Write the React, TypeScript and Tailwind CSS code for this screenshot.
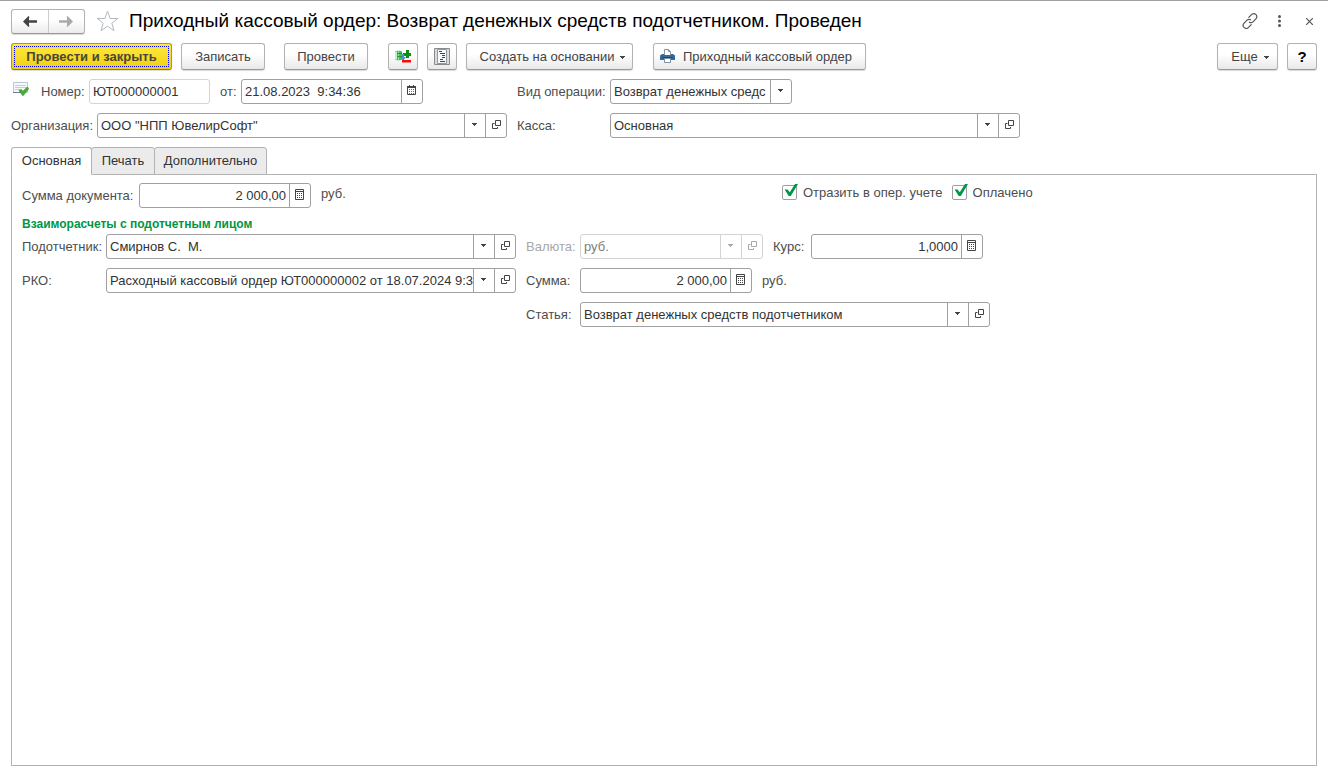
import { useState } from "react";
import type { ReactNode } from "react";

const commandClass =
  "flex h-[27px] shrink-0 items-center justify-center rounded-[3px] border border-[#b3b3b3] border-b-[#999] bg-linear-to-b from-white from-40% to-[#e9e9e9] text-[#444] shadow-[0_1px_1px_rgba(0,0,0,0.15)]";

function Caret({ className = "" }: { className?: string }) {
  return (
    <svg className={className} width="6" height="3" viewBox="0 0 6 3" fill="currentColor" aria-hidden="true">
      <path d="M0 0h5v1H4v1H3v1H2V2H1V1H0z" />
    </svg>
  );
}

function OpenIcon() {
  return (
    <svg width="10" height="9" viewBox="0 0 10 9" fill="none" stroke="currentColor" aria-hidden="true">
      <path d="M4.500 .5h5v5h-5zM3.500 3.500H1.500v5h5V7" />
    </svg>
  );
}

function CalculatorIcon() {
  return (
    <svg width="10" height="11" viewBox="0 0 10 11" fill="none" stroke="currentColor" aria-hidden="true">
      <path d="M.5 .5h8v10h-8zM1 2.500h7" />
      <path d="M2 4.500h5M2 6.500h5M2 8.500h5" strokeDasharray="1 1" />
    </svg>
  );
}

function CalendarIcon() {
  return (
    <svg width="10" height="11" viewBox="0 0 10 11" fill="none" stroke="currentColor" aria-hidden="true">
      <path d="M.5 1.500h8v8h-8z" />
      <path d="M0 2.500h9M0 1.500h9M2.500 0v2M6.500 0v2" />
      <path d="M2 4.500h5M2 6.500h5M2 8.500h5" strokeDasharray="1 1" opacity=".8" />
    </svg>
  );
}

type Tool = "list" | "open" | "calculator" | "calendar";

const toolIcons: Record<Tool, { label: string; icon: ReactNode }> = {
  list: { label: "Выбрать из списка", icon: <Caret /> },
  open: { label: "Открыть", icon: <OpenIcon /> },
  calculator: { label: "Калькулятор", icon: <CalculatorIcon /> },
  calendar: { label: "Календарь", icon: <CalendarIcon /> },
};

interface FieldProps {
  id: string;
  value: string;
  width: string;
  tools?: Tool[];
  numeric?: boolean;
  readOnly?: boolean;
  disabled?: boolean;
}

function Field({ id, value, width, tools = [], numeric, readOnly, disabled }: FieldProps) {
  const pale = readOnly || disabled;
  return (
    <div
      className={`flex h-[25px] shrink-0 overflow-hidden rounded-[3px] border bg-white ${width} ${
        pale ? "border-[#d4d4d4]" : "border-[#a0a0a0]"
      }`}
    >
      <input
        id={id}
        type="text"
        defaultValue={value}
        readOnly={readOnly}
        disabled={disabled}
        className={`min-w-0 flex-1 bg-transparent pl-[3px] outline-none ${numeric ? "pr-[3px] text-right" : ""} ${
          disabled ? "text-[#808080]" : "text-[#333]"
        }`}
      />
      {tools.map((tool) => (
        <button
          key={tool}
          type="button"
          disabled={disabled}
          aria-label={toolIcons[tool].label}
          className={`flex w-[21px] shrink-0 items-center justify-center border-l pb-[2px] ${
            disabled ? "border-[#d4d4d4] text-[#a8a8a8]" : "border-[#a0a0a0] text-[#444]"
          }`}
        >
          {toolIcons[tool].icon}
        </button>
      ))}
    </div>
  );
}

function Label({ htmlFor, className = "", children }: { htmlFor: string; className?: string; children: ReactNode }) {
  return (
    <label htmlFor={htmlFor} className={`shrink-0 whitespace-nowrap ${className || "text-[#4d4d4d]"}`}>
      {children}
    </label>
  );
}

function CheckField({ id, label }: { id: string; label: string }) {
  return (
    <div className="flex items-center gap-[6px] text-[#4d4d4d]">
      <span className="relative flex">
        <input
          id={id}
          type="checkbox"
          defaultChecked
          className="peer size-[15px] appearance-none rounded-[2px] border border-[#a0a0a0] bg-white"
        />
        <svg
          className="pointer-events-none absolute -top-[1px] left-[2px] hidden peer-checked:block"
          width="15"
          height="14"
          viewBox="0 0 15 14"
          fill="#009646"
          aria-hidden="true"
        >
          <path d="M.6 5.600h3l2.200 2.600L11 0h3L6.800 12H4.700z" />
        </svg>
      </span>
      <label htmlFor={id}>{label}</label>
    </div>
  );
}

function TitleBar() {
  return (
    <header className="flex h-[24px] items-center">
      <div className="flex h-[25px] w-[74px] shrink-0 overflow-hidden rounded-[3px] border border-[#b3b3b3] border-b-[#999] bg-linear-to-b from-white from-40% to-[#ececec] shadow-[0_1px_1px_rgba(0,0,0,0.15)]">
        <button type="button" aria-label="Назад" className="flex flex-1 items-center justify-center text-[#444]">
          <svg width="14" height="11" viewBox="0 0 14 11" fill="currentColor" aria-hidden="true">
            <path d="M0 5.500 5.500 0l1 1-2.600 3.300H14v2.400H3.900L6.500 10l-1 1z" />
            <path d="M1 5.500 6 1v9z" />
          </svg>
        </button>
        <button
          type="button"
          aria-label="Вперед"
          className="flex flex-1 items-center justify-center border-l border-[#ccc] text-[#aaa]"
        >
          <svg width="14" height="11" viewBox="0 0 14 11" fill="currentColor" aria-hidden="true">
            <path d="M14 5.500 8.500 0l-1 1 2.600 3.300H0v2.400h10.100L7.500 10l1 1z" />
            <path d="M13 5.500 8 1v9z" />
          </svg>
        </button>
      </div>
      <button type="button" aria-label="Добавить в избранное" className="ml-[11px] shrink-0">
        <svg width="23" height="22" viewBox="0 0 23 22" fill="none" stroke="#b4bac0" aria-hidden="true">
          <path d="m11.500 1.200 2.700 7.300h7.600l-6 4.700 2.200 7.500-6.500-4.500L5 20.700l2.200-7.500-6-4.700h7.600z" />
        </svg>
      </button>
      <h1 className="ml-[10px] min-w-0 flex-1 truncate text-[19px] leading-[24px] text-black">
        Приходный кассовый ордер: Возврат денежных средств подотчетником. Проведен
      </h1>
      <div className="flex shrink-0 items-center text-[#555]">
        <button type="button" aria-label="Получить ссылку" className="mr-[20px]">
          <svg width="16" height="16" viewBox="0 0 16 16" fill="none" stroke="currentColor" strokeWidth="1.200" strokeLinecap="round" aria-hidden="true">
            <path d="M6.800 4.400 9.500 1.700a2.900 2.900 0 0 1 4.600 3.900L11 8.800a2.900 2.900 0 0 1-3.600.4" />
            <path d="m9.200 11.600-2.700 2.700a2.900 2.900 0 0 1-4.600-3.900L5 7.200a2.900 2.900 0 0 1 3.600-.4" />
          </svg>
        </button>
        <button type="button" aria-label="Дополнительные действия" className="mr-[25px]">
          <svg width="3" height="12" viewBox="0 0 3 12" fill="currentColor" aria-hidden="true">
            <circle cx="1.500" cy="1.500" r="1.500" />
            <circle cx="1.500" cy="6" r="1.500" />
            <circle cx="1.500" cy="10.500" r="1.500" />
          </svg>
        </button>
        <button type="button" aria-label="Закрыть" className="mr-[4px]">
          <svg width="7" height="7" viewBox="0 0 7 7" fill="none" stroke="currentColor" strokeWidth="1.200" aria-hidden="true">
            <path d="m0 0 7 7M7 0 0 7" />
          </svg>
        </button>
      </div>
    </header>
  );
}

function CommandBar() {
  return (
    <div className="mt-[10px] flex items-center">
      <button
        type="button"
        className="h-[27px] w-[161px] shrink-0 rounded-[3px] border border-[#b59c00] border-b-[#8f7b00] bg-linear-to-b from-[#ffea3d] to-[#f2cf00] p-[2px] font-bold text-[#4a4636] shadow-[0_1px_1px_rgba(0,0,0,0.15)]"
      >
        <span className="flex h-full items-center justify-center border border-dotted border-[#0000ff]">
          Провести и закрыть
        </span>
      </button>
      <button type="button" className={`${commandClass} ml-[9px] w-[84px]`}>
        Записать
      </button>
      <button type="button" className={`${commandClass} ml-[19px] w-[84px]`}>
        Провести
      </button>
      <button type="button" aria-label="Движения документа" className={`${commandClass} ml-[20px] w-[30px]`}>
        <svg width="16" height="17" viewBox="0 0 16 17" aria-hidden="true">
          <path d="M0 3.500C0 2.500 7 2.500 7 3.500v8c0 1-7 1-7 0z" fill="#3fbf55" />
          <path d="M0 3.500h2v8H0z" fill="#c3efc9" />
          <path d="M3 3h1v9H3z" fill="#8fe09b" />
          <path d="M2 5.500h5M2 8.500h5" stroke="#1f9a35" />
          <path d="M11 2h3v3h2v3h-2v2h-3V8H8V5h3z" fill="#0c8f14" />
          <path d="M7 6h2v3h2l-3 4-3-4h2z" fill="#4795cf" />
          <path d="M7 12h9v2.500H7z" fill="#f50d0d" />
        </svg>
      </button>
      <button type="button" aria-label="Журнал" className={`${commandClass} ml-[9px] w-[30px]`}>
        <svg width="16" height="17" viewBox="0 0 16 17" fill="none" aria-hidden="true">
          <path d="M.5.5h15v16H.5z" fill="#d9dcdf" stroke="#8a8a8a" />
          <path d="M3.500 1.500h9v14h-9z" fill="#f5fbff" stroke="#8f979d" />
          <path d="M5 3.500h3M6 5.500h5M8 7.500h3M8 9.500h3M6 11.500h3M6 13.500h5" stroke="#0f527f" />
        </svg>
      </button>
      <button type="button" className={`${commandClass} ml-[9px] w-[167px] gap-[6px] pl-[7px]`}>
        Создать на основании
        <Caret className="mt-[2px]" />
      </button>
      <button type="button" className={`${commandClass} ml-[20px] w-[213px] gap-[8px] pr-[7px]`}>
        <svg className="mb-[2px]" width="15" height="14" viewBox="0 0 15 14" aria-hidden="true">
          <path d="M4.500 6V.5h4L10.500 2.500V6" fill="#fff" stroke="#8496a8" />
          <path d="M8.500.5v2h2" fill="none" stroke="#8496a8" />
          <path d="M2 5h2v1h7V5h2l2 1.500V11H0V6.500z" fill="#386a97" />
          <path d="M2 8.500h11" stroke="#1f4668" />
          <path d="M4.500 9.500h6v4h-6z" fill="#fff" stroke="#7b8fa3" />
        </svg>
        Приходный кассовый ордер
      </button>
      <button type="button" className={`${commandClass} ml-auto w-[61px] gap-[6px] pl-[6px]`}>
        Еще
        <Caret className="mt-[2px]" />
      </button>
      <button type="button" aria-label="Справка" className={`${commandClass} ml-[9px] w-[30px] text-[15px] font-bold text-black`}>
        ?
      </button>
    </div>
  );
}

function DocumentHeader() {
  return (
    <div className="mt-[9px] flex flex-col gap-[9px]">
      <div className="flex items-center gap-[10px]">
        <div className="flex w-[496px] shrink-0 items-center">
          <svg className="ml-[2px] mb-[5px] shrink-0" width="16" height="14" viewBox="0 0 16 14" aria-hidden="true">
            <path d="M.5.5h14v10H.5z" fill="#f7fafc" stroke="#b9c6d1" />
            <path d="M0 10.500h8" stroke="#6f8193" />
            <path d="M2 3.500h11M2 5.500h11M2 7.500h5" stroke="#c3ced8" />
            <path d="m6 8.600 2.200-1.200L10 9.300 14.200 5l1.500 1.600-5.400 6.800H9.600z" fill="#45b32f" stroke="#2a8020" strokeWidth=".6" />
          </svg>
          <div className="ml-[12px] w-[48px] shrink-0">
            <Label htmlFor="number">Номер:</Label>
          </div>
          <Field id="number" value="ЮТ000000001" width="w-[121px]" readOnly />
          <div className="ml-[10px] w-[21px] shrink-0">
            <Label htmlFor="date">от:</Label>
          </div>
          <Field id="date" value="21.08.2023  9:34:36" width="w-[182px]" tools={["calendar"]} />
        </div>
        <div className="flex items-center">
          <div className="w-[93px] shrink-0">
            <Label htmlFor="operation">Вид операции:</Label>
          </div>
          <div className="relative flex h-[25px] w-[182px] shrink-0 rounded-[3px] border border-[#a0a0a0]">
            <select
              id="operation"
              className="min-w-0 flex-1 appearance-none bg-transparent pr-[21px] pl-[3px] text-[#333] outline-none"
            >
              <option>Возврат денежных средс</option>
            </select>
            <span className="pointer-events-none absolute inset-y-0 right-0 flex w-[21px] items-center justify-center border-l border-[#a0a0a0] pb-[2px] text-[#444]">
              <Caret />
            </span>
          </div>
        </div>
      </div>
      <div className="flex items-center gap-[10px]">
        <div className="flex w-[496px] shrink-0 items-center">
          <div className="w-[86px] shrink-0">
            <Label htmlFor="organization">Организация:</Label>
          </div>
          <Field id="organization" value={'ООО "НПП ЮвелирСофт"'} width="w-[410px]" tools={["list", "open"]} />
        </div>
        <div className="flex items-center">
          <div className="w-[93px] shrink-0">
            <Label htmlFor="cashbox">Касса:</Label>
          </div>
          <Field id="cashbox" value="Основная" width="w-[410px]" tools={["list", "open"]} />
        </div>
      </div>
    </div>
  );
}

function MainTab() {
  return (
    <div className="flex flex-col px-[10px] pt-[8px]">
      <div className="flex">
        <div className="flex w-[760px] shrink-0 items-center">
          <div className="w-[117px] shrink-0">
            <Label htmlFor="total">Сумма документа:</Label>
          </div>
          <Field id="total" value="2 000,00" width="w-[172px]" tools={["calculator"]} numeric />
          <span className="ml-[10px] pb-[4px] text-[#4d4d4d]">руб.</span>
        </div>
        <div className="flex h-[19px] shrink-0 items-center gap-[9px] whitespace-nowrap">
          <CheckField id="reflect" label="Отразить в опер. учете" />
          <CheckField id="paid" label="Оплачено" />
        </div>
      </div>
      <h2 className="mt-[8px] text-[12px] leading-[16px] font-bold text-[#009646]">
        Взаиморасчеты с подотчетным лицом
      </h2>
      <div className="mt-[2px] flex items-start gap-[10px]">
        <div className="flex shrink-0 flex-col gap-[9px]">
          <div className="flex items-center">
            <div className="w-[84px] shrink-0">
              <Label htmlFor="person">Подотчетник:</Label>
            </div>
            <Field id="person" value="Смирнов С.  М." width="w-[410px]" tools={["list", "open"]} />
          </div>
          <div className="flex items-center">
            <div className="w-[84px] shrink-0">
              <Label htmlFor="rko">РКО:</Label>
            </div>
            <Field
              id="rko"
              value="Расходный кассовый ордер ЮТ000000002 от 18.07.2024 9:3"
              width="w-[410px]"
              tools={["list", "open"]}
            />
          </div>
        </div>
        <div className="flex shrink-0 flex-col gap-[9px]">
          <div className="flex items-center">
            <div className="w-[54px] shrink-0">
              <Label htmlFor="currency" className="text-[#a8a8a8]">
                Валюта:
              </Label>
            </div>
            <Field id="currency" value="руб." width="w-[183px]" tools={["list", "open"]} disabled />
            <div className="ml-[10px] w-[38px] shrink-0">
              <Label htmlFor="rate">Курс:</Label>
            </div>
            <Field id="rate" value="1,0000" width="w-[172px]" tools={["calculator"]} numeric />
          </div>
          <div className="flex items-center">
            <div className="w-[54px] shrink-0">
              <Label htmlFor="sum">Сумма:</Label>
            </div>
            <Field id="sum" value="2 000,00" width="w-[172px]" tools={["calculator"]} numeric />
            <span className="ml-[10px] text-[#4d4d4d]">руб.</span>
          </div>
          <div className="flex items-center">
            <div className="w-[54px] shrink-0">
              <Label htmlFor="article">Статья:</Label>
            </div>
            <Field
              id="article"
              value="Возврат денежных средств подотчетником"
              width="w-[410px]"
              tools={["list", "open"]}
            />
          </div>
        </div>
      </div>
    </div>
  );
}

const tabs = [
  { title: "Основная", width: "w-[81px]" },
  { title: "Печать", width: "w-[64px]" },
  { title: "Дополнительно", width: "w-[113px]" },
];

export default function App() {
  const [active, setActive] = useState(0);
  return (
    <main className="flex min-h-screen flex-col border-t border-[#a0a0a0] bg-white px-[11px] pt-[8px] pb-[7px] font-['Liberation_Sans',Arial,sans-serif] text-[13px] leading-[16px]">
      <TitleBar />
      <CommandBar />
      <DocumentHeader />
      <div role="tablist" className="mt-[9px] flex">
        {tabs.map((tab, index) => (
          <button
            key={tab.title}
            type="button"
            role="tab"
            aria-selected={index === active}
            onClick={() => setActive(index)}
            className={`relative -mb-px h-[28px] shrink-0 rounded-t-[3px] border border-[#b3b3b3] text-[#333] ${tab.width} ${
              index > 0 ? "-ml-px" : ""
            } ${index === active ? "z-10 border-b-white bg-white" : "bg-[#ebebeb]"}`}
          >
            {tab.title}
          </button>
        ))}
      </div>
      <section role="tabpanel" className="flex-1 border border-[#b3b3b3]">
        {active === 0 && <MainTab />}
      </section>
    </main>
  );
}
